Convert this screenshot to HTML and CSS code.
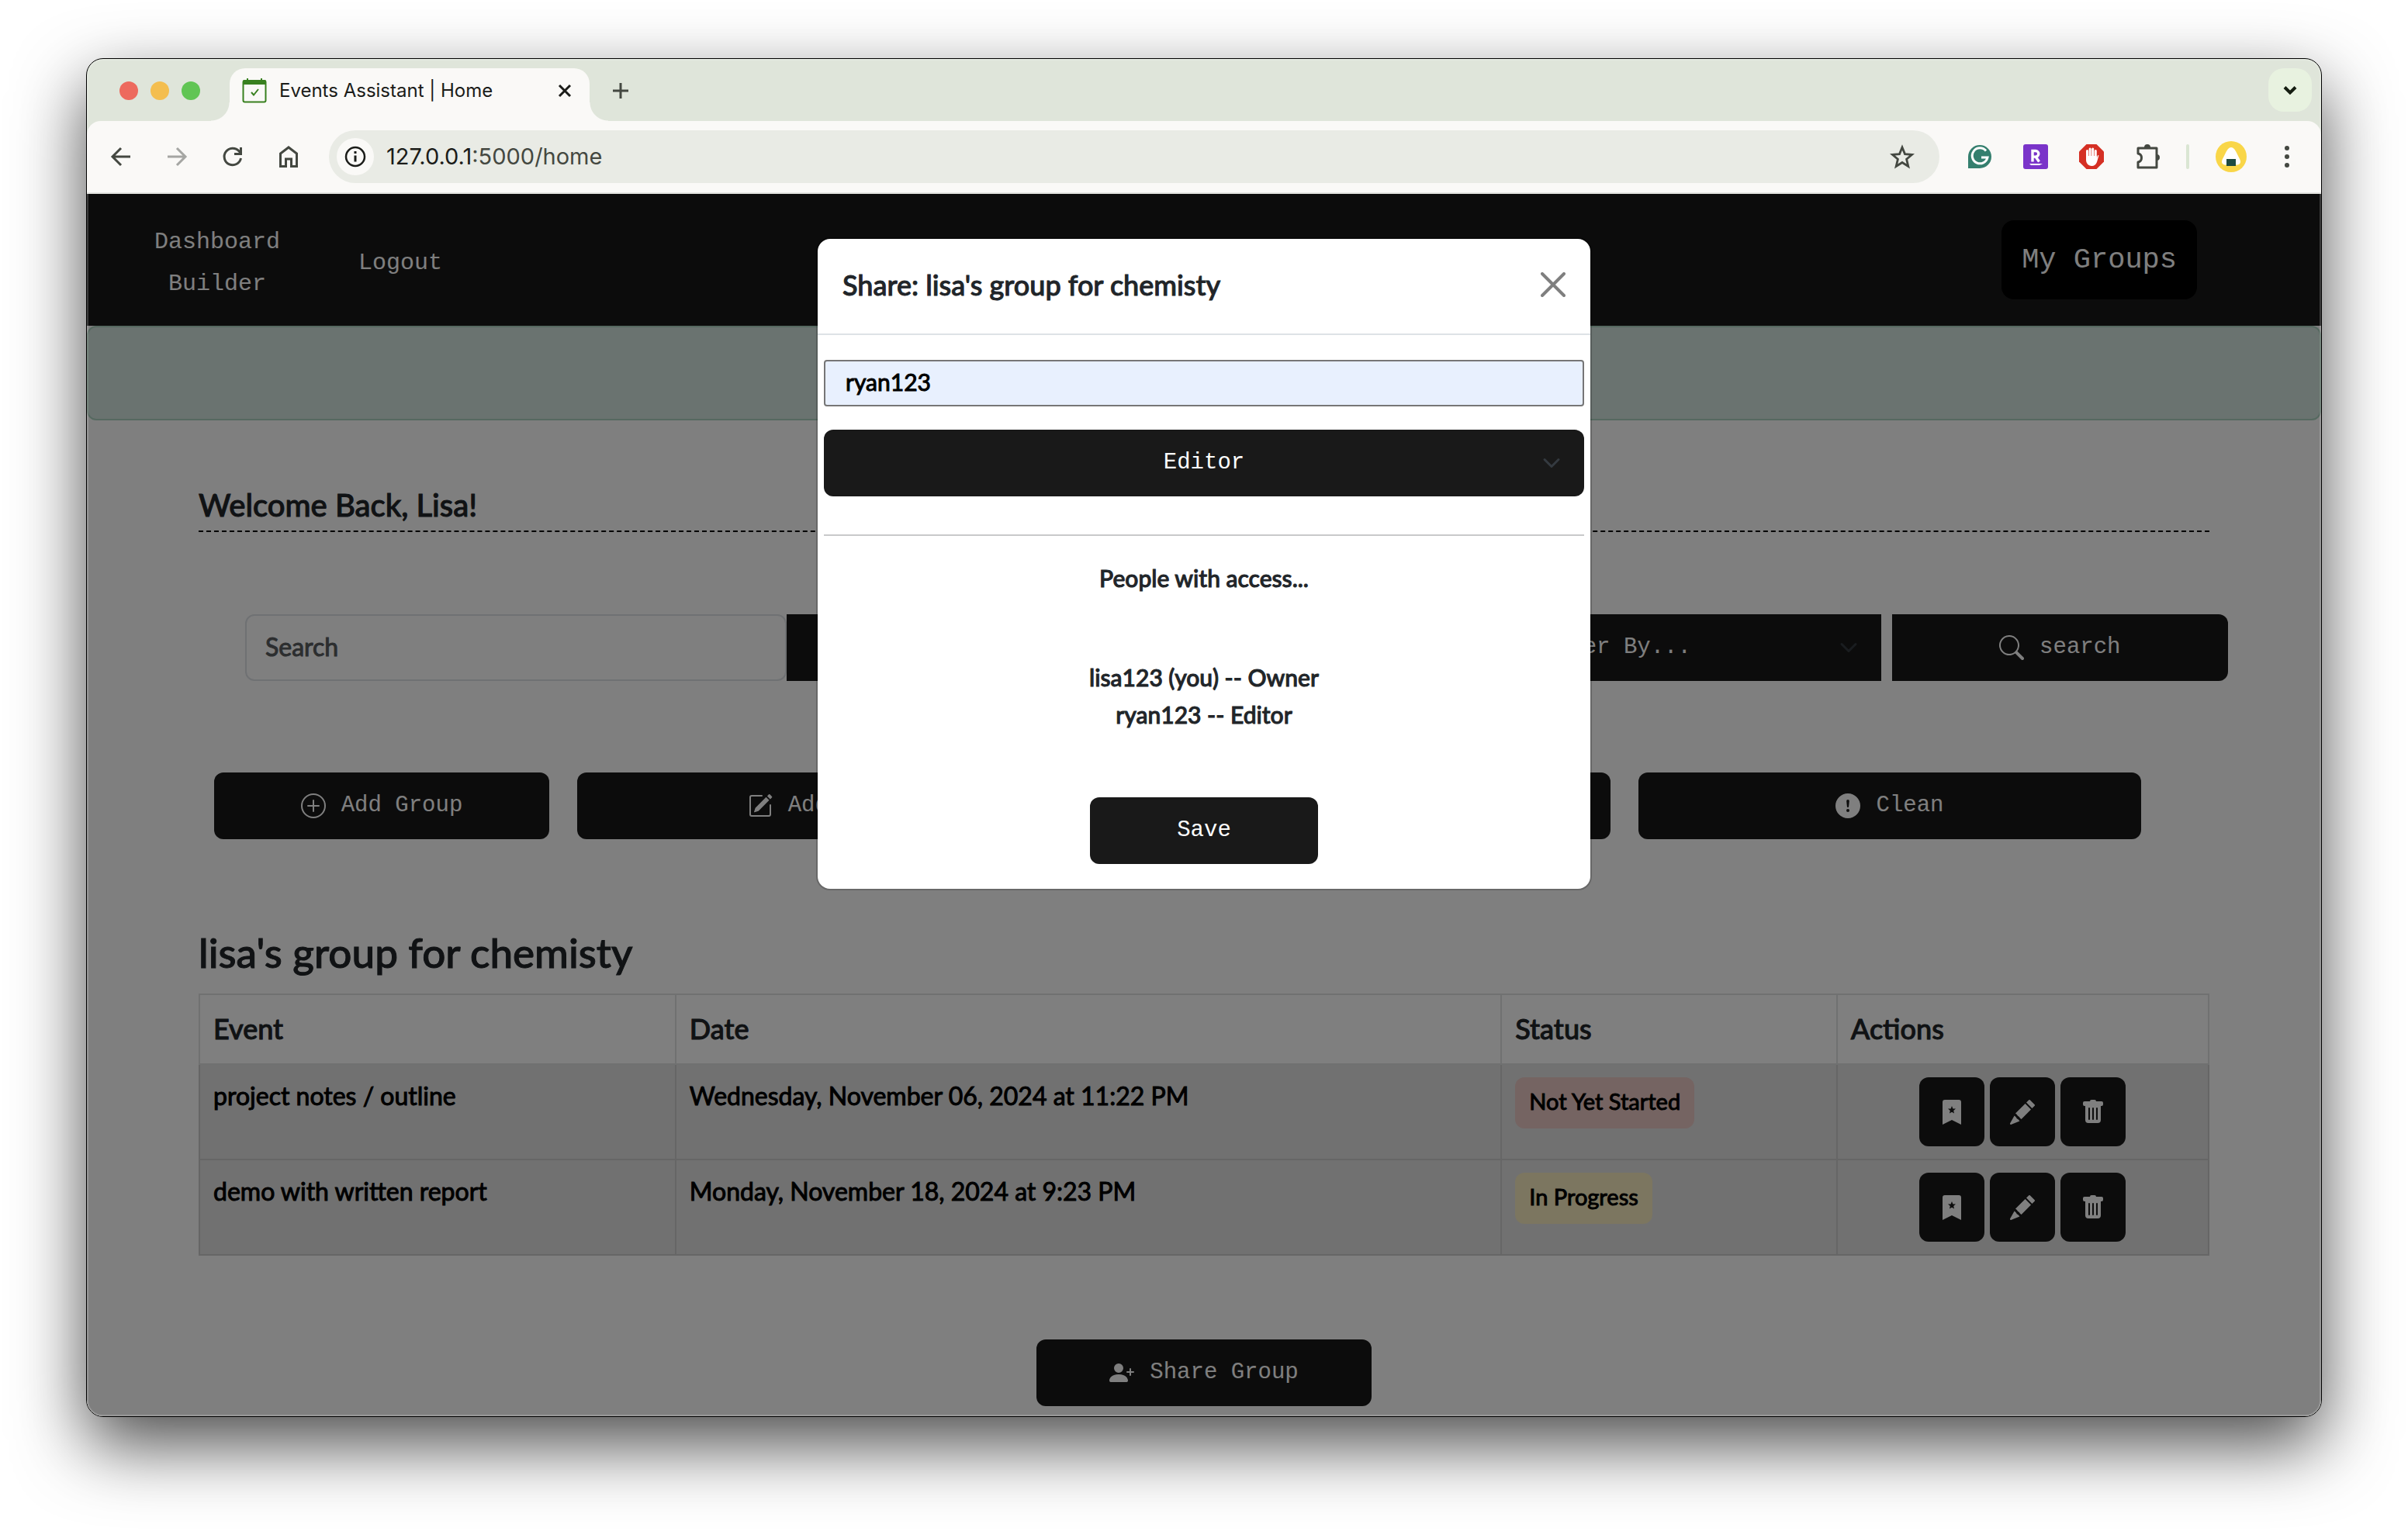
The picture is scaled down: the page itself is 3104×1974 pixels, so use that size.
FILE: index.html
```html
<!DOCTYPE html>
<html lang="en">
<head>
<meta charset="utf-8">
<meta name="viewport" content="width=device-width, initial-scale=1">
<title>Events Assistant | Home</title>
<link rel="stylesheet" href="styles.css">
</head>
<body>
<svg width="0" height="0" class="sprite" aria-hidden="true">
  <symbol id="i-bookmark" viewBox="0 0 16 16"><path fill-rule="evenodd" d="M2 16V1.500A1.500 1.500 0 0 1 3.500 0h9A1.500 1.500 0 0 1 14 1.500V16l-6-3zM8 4l-.7 1.700-1.800.1 1.400 1.200-.4 1.800L8 7.850l1.500.95-.4-1.800 1.400-1.200-1.800-.1z"/></symbol>
  <symbol id="i-pencil" viewBox="0 0 16 16"><path d="M12.854.146a.5.5 0 0 0-.707 0L10.500 1.793 14.207 5.500l1.647-1.646a.5.5 0 0 0 0-.708zM13.500 6.207 9.793 2.500 3.500 8.800l.9.7.6.9.9.6.6.9.8.600zM6.200 13.700l-.8-.9-1-.7-.6-1-1-.8L0 15.300a.5.5 0 0 0 .6.650z"/></symbol>
  <symbol id="i-trash" viewBox="0 0 16 16"><path d="M2.500 1a1 1 0 0 0-1 1v1a1 1 0 0 0 1 1H3v9a2 2 0 0 0 2 2h6a2 2 0 0 0 2-2V4h.5a1 1 0 0 0 1-1V2a1 1 0 0 0-1-1H10a1 1 0 0 0-1-1H7a1 1 0 0 0-1 1zm3 4a.5.5 0 0 1 .5.5v7a.5.5 0 0 1-1 0v-7a.5.5 0 0 1 .5-.5M8 5a.5.5 0 0 1 .5.5v7a.5.5 0 0 1-1 0v-7A.5.5 0 0 1 8 5m3 .5v7a.5.5 0 0 1-1 0v-7a.5.5 0 0 1 1 0"/></symbol>
</svg>

<div class="window">
  <header class="tabstrip">
    <div class="lights"><span class="light red"></span><span class="light amber"></span><span class="light green"></span></div>
    <div class="tab">
      <svg class="favicon" viewBox="0 0 32 32"><rect x="1.500" y="3" width="29" height="27.500" rx="2" fill="none" stroke="#38801f" stroke-width="2"/><path d="M1 8V4a2 2 0 0 1 2-2h3V0h2v2h16V0h2v2h3a2 2 0 0 1 2 2v4z" fill="#38801f"/><path d="m12 18 3 3.500 6-7.500" fill="none" stroke="#38801f" stroke-width="2"/></svg>
      <span class="tab-title">Events Assistant | Home</span>
      <button class="bare" aria-label="Close tab"><svg width="20" height="20" viewBox="0 0 20 20"><path d="m3 3 14 14M17 3 3 17" stroke="#1b1c19" stroke-width="3" fill="none"/></svg></button>
    </div>
    <button class="bare new-tab" aria-label="New tab"><svg width="22" height="22" viewBox="0 0 22 22"><path d="M11 1v20M1 11h20" stroke="#444841" stroke-width="3"/></svg></button>
    <button class="bare tab-search" aria-label="Search tabs"><svg width="20" height="20" viewBox="0 0 20 20"><path d="m3 6.500 7 7 7-7" fill="none" stroke="#151d11" stroke-width="4"/></svg></button>
  </header>

  <div class="toolbar">
    <button class="bare" aria-label="Back"><svg width="32" height="32" viewBox="0 0 32 32"><path d="M28 16H6M16 5 5 16l11 11" fill="none" stroke="#444841" stroke-width="3"/></svg></button>
    <button class="bare" aria-label="Forward"><svg width="32" height="32" viewBox="0 0 32 32"><path d="M4 16h22M16 5l11 11-11 11" fill="none" stroke="#a5a6a3" stroke-width="3"/></svg></button>
    <button class="bare" aria-label="Reload"><svg width="32" height="32" viewBox="0 0 32 32"><path d="M26.500 18A10.800 10.800 0 1 1 24 8.800l2 2.200" fill="none" stroke="#444841" stroke-width="3"/><path d="M28 4v10H18v-3h7V4z" fill="#444841"/></svg></button>
    <button class="bare" aria-label="Home"><svg width="32" height="32" viewBox="0 0 32 32"><path d="M5.500 28.500V12L16 4l10.500 8v16.500h-7V19h-7v9.500z" fill="none" stroke="#444841" stroke-width="3"/></svg></button>
    <div class="omnibox">
      <span class="info"><svg width="28" height="28" viewBox="0 0 28 28"><circle cx="14" cy="14" r="12" fill="none" stroke="#1b1c19" stroke-width="2.500"/><path d="M14 12.500v8M14 7v3" stroke="#1b1c19" stroke-width="3"/></svg></span>
      <span class="url">127.0.0.1<span class="path">:5000/home</span></span>
      <button class="bare" aria-label="Bookmark this tab"><svg width="32" height="32" viewBox="0 0 32 32"><path d="m16 4 3.500 8.600 9.200.7-7.100 6 2.200 9.100L16 23.500l-7.800 4.900 2.200-9.100-7.100-6 9.200-.7z" fill="none" stroke="#444841" stroke-width="2.800"/></svg></button>
    </div>
    <div class="extensions">
      <svg width="32" height="32" viewBox="0 0 32 32"><path d="M1 16a15 15 0 1 1 15 15H1z" fill="#347f6e"/><path d="M24 8.500A10 10 0 1 0 26 17h-8" fill="none" stroke="#fff" stroke-width="3"/></svg>
      <svg width="32" height="32" viewBox="0 0 32 32"><rect width="32" height="32" rx="3" fill="#7a34c9"/><path d="M12 22.500V8.500h4a3.800 3.800 0 0 1 0 7.600H12m4 0 4.500 6.400" fill="none" stroke="#fff" stroke-width="3.400"/><path d="M8 25h17l-4 2H10z" fill="#fff"/></svg>
      <svg width="32" height="32" viewBox="0 0 32 32"><path d="M9.500 0h13L32 9.500v13L22.500 32h-13L0 22.500v-13z" fill="#d53024"/><path d="M10.500 18V8.500M14.100 16V6M17.700 16V6M21.300 17V8.500" stroke="#fff" stroke-width="3" stroke-linecap="round"/><path d="M9 15h13.800v3l1-3c.6-1.500 1.800-1 1.400.3L23 23c-1.500 3.500-3.500 5-6.500 5-5 0-7.500-4-7.500-8z" fill="#fff"/></svg>
      <svg width="32" height="32" viewBox="0 0 32 32"><path d="M4 5h24v25H4v-7c6-1 6-10 0-11z" fill="none" stroke="#444841" stroke-width="3" stroke-linejoin="round"/><path d="M12 4a4 4 0 0 1 8 0zM28 13a4 4 0 0 1 0 8z" fill="#444841"/></svg>
      <span class="divider"></span>
      <svg width="40" height="40" viewBox="0 0 40 40"><circle cx="20" cy="20" r="20" fill="#f9d648"/><path d="M20 8c3 0 5 3 7 7l4.500 9c1.500 4-.5 6.500-4 6.500h-15c-3.500 0-5.500-2.500-4-6.500l4.500-9c2-4 4-7 7-7z" fill="#fff"/><path d="M14 23h12v9H14z" fill="#1d4a41"/></svg>
      <button class="bare" aria-label="Menu"><svg width="24" height="32" viewBox="0 0 24 32"><circle cx="12" cy="5" r="3" fill="#444841"/><circle cx="12" cy="16" r="3" fill="#444841"/><circle cx="12" cy="27" r="3" fill="#444841"/></svg></button>
    </div>
  </div>

  <div class="viewport">
    <nav class="nav">
      <a href="#" class="nav-link brand">Dashboard Builder</a>
      <a href="#" class="nav-link">Logout</a>
      <a href="#" class="nav-groups">My Groups</a>
    </nav>
    <div class="banner"></div>

    <main class="content">
      <h1 class="welcome">Welcome Back, Lisa!</h1>

      <form class="search-row">
        <input class="search-input" type="text" placeholder="Search" aria-label="Search">
        <select class="select" aria-label="Sort"><option></option></select>
        <select class="select filter" aria-label="Filter"><option>Filter By...</option></select>
        <button class="btn search-btn" type="button"><svg class="icon" viewBox="0 0 16 16"><path d="M11.742 10.344a6.500 6.500 0 1 0-1.397 1.398h-.001q.044.06.098.115l3.850 3.850a1 1 0 0 0 1.415-1.414l-3.850-3.850a1 1 0 0 0-.115-.1zM12 6.500a5.500 5.500 0 1 1-11 0 5.500 5.500 0 0 1 11 0"/></svg>search</button>
      </form>

      <div class="button-row">
        <button class="btn"><svg class="icon" viewBox="0 0 16 16"><path d="M8 15A7 7 0 1 1 8 1a7 7 0 0 1 0 14m0 1A8 8 0 1 0 8 0a8 8 0 0 0 0 16"/><path d="M8 4a.5.5 0 0 1 .5.5v3h3a.5.5 0 0 1 0 1h-3v3a.5.5 0 0 1-1 0v-3h-3a.5.5 0 0 1 0-1h3v-3A.5.5 0 0 1 8 4"/></svg>Add Group</button>
        <button class="btn"><svg class="icon" viewBox="0 0 16 16"><path d="M15.502 1.940a.5.5 0 0 1 0 .706L14.459 3.690l-2-2L13.502.646a.5.5 0 0 1 .707 0l1.293 1.293zm-1.750 2.456-2-2L4.939 9.210a.5.5 0 0 0-.121.196l-.805 2.414a.25.25 0 0 0 .316.316l2.414-.805a.5.5 0 0 0 .196-.120z"/><path fill-rule="evenodd" d="M1 13.500A1.500 1.500 0 0 0 2.500 15h11a1.500 1.500 0 0 0 1.500-1.500v-6a.5.5 0 0 0-1 0v6a.5.5 0 0 1-.5.5h-11a.5.5 0 0 1-.5-.5v-11a.5.5 0 0 1 .5-.5H9a.5.5 0 0 0 0-1H2.500A1.500 1.500 0 0 0 1 2.500z"/></svg>Add Event</button>
        <button class="btn" aria-label="Edit"></button>
        <button class="btn"><svg class="icon" viewBox="0 0 16 16"><path d="M16 8A8 8 0 1 1 0 8a8 8 0 0 1 16 0M8 4a.905.905 0 0 0-.9.995l.350 3.507a.552.552 0 0 0 1.100 0l.350-3.507A.905.905 0 0 0 8 4m.002 6a1 1 0 1 0 0 2 1 1 0 0 0 0-2"/></svg>Clean</button>
      </div>

      <h2 class="group-title">lisa's group for chemisty</h2>
      <table class="events">
        <colgroup><col class="c-event"><col class="c-date"><col class="c-status"><col></colgroup>
        <thead><tr><th>Event</th><th>Date</th><th>Status</th><th>Actions</th></tr></thead>
        <tbody>
          <tr>
            <td>project notes / outline</td>
            <td>Wednesday, November 06, 2024 at 11:22 PM</td>
            <td><span class="badge pink">Not Yet Started</span></td>
            <td><div class="actions">
              <button class="action" aria-label="Bookmark"><svg class="icon"><use href="#i-bookmark"/></svg></button>
              <button class="action" aria-label="Edit"><svg class="icon"><use href="#i-pencil"/></svg></button>
              <button class="action" aria-label="Delete"><svg class="icon"><use href="#i-trash"/></svg></button>
            </div></td>
          </tr>
          <tr>
            <td>demo with written report</td>
            <td>Monday, November 18, 2024 at 9:23 PM</td>
            <td><span class="badge yellow">In Progress</span></td>
            <td><div class="actions">
              <button class="action" aria-label="Bookmark"><svg class="icon"><use href="#i-bookmark"/></svg></button>
              <button class="action" aria-label="Edit"><svg class="icon"><use href="#i-pencil"/></svg></button>
              <button class="action" aria-label="Delete"><svg class="icon"><use href="#i-trash"/></svg></button>
            </div></td>
          </tr>
        </tbody>
      </table>
      <button class="btn share"><svg class="icon" viewBox="0 0 16 16"><path d="M1 14s-1 0-1-1 1-4 6-4 6 3 6 4-1 1-1 1zm5-6a3 3 0 1 0 0-6 3 3 0 0 0 0 6"/><path d="M13.500 5a.5.5 0 0 1 .5.5V7h1.500a.5.5 0 0 1 0 1H14v1.500a.5.5 0 0 1-1 0V8h-1.500a.5.5 0 0 1 0-1H13V5.500a.5.5 0 0 1 .5-.5"/></svg>Share Group</button>
    </main>

    <div class="backdrop">
      <section class="modal" role="dialog" aria-labelledby="share-title">
        <header class="modal-head">
          <h2 id="share-title">Share: lisa's group for chemisty</h2>
          <button class="bare" aria-label="Close"><svg width="32" height="32" viewBox="0 0 32 32"><path d="m2 2 28 28M30 2 2 30" stroke="#7f7f7f" stroke-width="4" stroke-linecap="round"/></svg></button>
        </header>
        <form class="modal-body">
          <input class="user-input" type="text" value="ryan123" aria-label="Username">
          <select class="select role" aria-label="Role"><option>Editor</option></select>
          <hr>
          <p class="access">People with access...</p>
          <ul class="people"><li>lisa123 (you) -- Owner</li><li>ryan123 -- Editor</li></ul>
          <button class="btn save" type="button">Save</button>
        </form>
      </section>
    </div>
  </div>
</div>
</body>
</html>
```

FILE: styles.css
```css
*, *::before, *::after { box-sizing: border-box; }

:root {
  --hand: Lato, "Open Sans", sans-serif;
  --mono: "Liberation Mono", monospace;
  --ui: Inter, "Liberation Sans", sans-serif;
  --ink: #212529;
  --dark: #191919;
}

body {
  margin: 0;
  min-height: 100vh;
  padding: 75px 111px 147px;
  display: flex;
  background: #fff;
  font-family: var(--hand);
  font-size: 32px;
  line-height: 48px;
  color: var(--ink);
}

h1, h2, p, ul { margin: 0; padding: 0; font-weight: 500; }
ul { list-style: none; }
button, input, select { font: inherit; color: inherit; margin: 0; }
button { cursor: pointer; }
svg { display: block; flex: none; }
.sprite { position: absolute; }
.bare { border: 0; padding: 0; background: none; display: grid; place-items: center; }

/* Browser window */
.window {
  position: relative;
  flex: 1;
  min-width: 0;
  display: flex;
  flex-direction: column;
  overflow: hidden;
  border: 1px solid #000;
  border-radius: 22px;
  background: #dfe5da;
  box-shadow: 0 36px 90px rgba(0, 0, 0, .7);
}
.window::after {
  content: "";
  position: absolute;
  inset: 0;
  border: 2px solid rgba(255, 255, 255, .2);
  border-radius: 20px;
  pointer-events: none;
}

.tabstrip { height: 80px; padding: 12px 12px 0 42px; display: flex; font-family: var(--ui); }
.lights { display: flex; gap: 16px; padding-top: 17px; width: 142px; }
.light { width: 24px; height: 24px; border-radius: 50%; }
.red { background: #ed6a5e; }
.amber { background: #f4be4f; }
.green { background: #61c554; }
.tab {
  position: relative;
  width: 464px;
  padding: 0 22px 10px 16px;
  display: flex;
  align-items: center;
  background: #faf9f7;
  border-radius: 20px 20px 0 0;
}
.tab::before, .tab::after {
  content: "";
  position: absolute;
  bottom: 0;
  width: 24px;
  height: 24px;
}
.tab::before { right: 100%; background: radial-gradient(circle at 0 0, transparent 23px, #faf9f7 24px); }
.tab::after { left: 100%; background: radial-gradient(circle at 100% 0, transparent 23px, #faf9f7 24px); }
.favicon { width: 32px; height: 32px; }
.tab-title { flex: 1; padding-left: 16px; font-size: 24px; line-height: 32px; color: #1b1c19; }
.new-tab { width: 80px; height: 58px; }
.tab-search { width: 56px; height: 56px; margin-left: auto; border-radius: 20px; background: #e8f2e0; }

.toolbar {
  height: 94px;
  padding: 0 32px 0 28px;
  display: flex;
  align-items: center;
  gap: 40px;
  background: #faf9f7;
  border-bottom: 2px solid #e3e4e0;
  border-radius: 18px 18px 0 0;
  font-family: var(--ui);
}
.omnibox {
  flex: 1;
  height: 68px;
  margin-left: -4px;
  padding: 0 32px 0 10px;
  display: flex;
  align-items: center;
  border-radius: 34px;
  background: #e9ebe5;
}
.info { width: 48px; height: 48px; display: grid; place-items: center; border-radius: 50%; background: #faf9f7; }
.url { flex: 1; padding-left: 16px; font-size: 29px; color: #1b1c19; }
.path { color: #444841; }
.extensions { display: flex; align-items: center; gap: 40px; margin-left: -4px; }
.divider { width: 4px; height: 32px; margin: 0 -6px; border-radius: 2px; background: #dae6d3; }

/* Page: the handwriting-style text carries a slight stroke for weight */
.viewport { position: relative; flex: 1; background: #fff; -webkit-text-stroke: 1px; }
.nav {
  min-height: 170px;
  padding: 0 160px 0 72px;
  display: flex;
  align-items: center;
  background: var(--dark);
  font-family: var(--mono);
  -webkit-text-stroke: 0;
}
.nav a { color: #fff; text-decoration: none; text-align: center; }
.nav-link { padding-top: 8px; font-size: 30px; line-height: 54px; margin-right: 86px; }
.brand { width: 192px; }
.nav .nav-groups {
  margin-left: auto;
  padding: 24px 26px;
  border-radius: 16px;
  background: #000;
  font-size: 37px;
  line-height: 54px;
}
.banner { height: 122px; border: 2px solid #acd3c1; border-radius: 12px; background: #d4e6e1; }

.content { padding: 82px 144px 8px; }
.welcome {
  padding-bottom: 6px;
  border-bottom: 2px dashed #000;
  font-size: 40px;
  line-height: 54px;
}

.btn, .select {
  height: 86px;
  border: 0;
  border-radius: 12px;
  background: var(--dark);
  color: #fff;
  font-family: var(--mono);
  font-size: 29px;
  -webkit-text-stroke: 0;
}
.btn { display: flex; align-items: center; justify-content: center; gap: 20px; padding: 0; }
.icon { width: 32px; height: 32px; fill: currentColor; }
.select {
  appearance: none;
  text-align: center;
  text-align-last: center;
  padding: 0 32px;
  background: var(--dark) url("data:image/svg+xml,%3Csvg xmlns='http://www.w3.org/2000/svg' viewBox='0 0 16 16'%3E%3Cpath fill='none' stroke='%23343a40' stroke-linecap='round' stroke-linejoin='round' stroke-width='2' d='m2 5 6 6 6-6'/%3E%3C/svg%3E") no-repeat right 30px center / 24px;
}

.search-row {
  display: grid;
  grid-template-columns: 29fr 29fr 14px 29fr 14px 18fr;
  margin: 106px -24px 0 60px;
}
.search-row .select { border-radius: 0; min-width: 0; }
.search-row .filter { grid-column: 4; }
.search-input {
  min-width: 0;
  height: 86px;
  padding: 0 24px 4px;
  border: 2px solid #dee2e6;
  border-radius: 12px;
  background: #fff;
}
.search-input::placeholder { color: #595c5f; opacity: 1; }
.search-row .search-btn { grid-column: 6; border-radius: 0 12px 12px 0; }

.button-row {
  display: grid;
  grid-template-columns: 2fr 3fr 3fr 3fr;
  gap: 36px;
  margin: 118px 88px 0 20px;
}

.group-title { margin-top: 110px; font-size: 53px; line-height: 72px; }
.events {
  width: 100%;
  margin-top: 17px;
  border-collapse: collapse;
  table-layout: fixed;
}
.c-event { width: 23.7%; }
.c-date { width: 41.1%; }
.c-status { width: 16.7%; }
.events th, .events td { border: 2px solid #e0e2e3; padding: 16px 17px; text-align: left; vertical-align: top; }
.events th { height: 90px; font-size: 36px; line-height: 54px; font-weight: 500; }
.events td { height: 123px; background: #e3e3e3; border-color: #cdcdcd; color: #000; }
.badge { display: block; width: max-content; padding: 7px 18px 11px; border-radius: 12px; font-size: 29px; }
.pink { background: #eac8c4; }
.yellow { background: #f8ecc0; }
.actions { display: flex; justify-content: center; gap: 7px; }
.action { width: 84px; height: 89px; padding: 0; border: 0; border-radius: 12px; background: var(--dark); color: #fff; display: grid; place-items: center; }
.share { width: 432px; margin: 108px auto 0; }

/* Share dialog */
.backdrop {
  position: absolute;
  inset: 0;
  padding-top: 56px;
  display: flex;
  justify-content: center;
  align-items: flex-start;
  background: rgba(0, 0, 0, .5);
}
.modal {
  width: 100%;
  max-width: 1000px;
  border: 2px solid rgba(0, 0, 0, .175);
  border-radius: 18px;
  background: #fff;
  background-clip: padding-box;
  font-size: 30px;
}
.modal-head {
  padding: 30px 32px 34px;
  display: flex;
  align-items: center;
  justify-content: space-between;
  border-bottom: 2px solid #dee2e6;
}
.modal-head h2 { font-size: 36px; line-height: 58px; }
.modal-body { padding: 32px 8px; display: flex; flex-direction: column; }
.user-input {
  height: 60px;
  padding: 0 26px 4px;
  border: 2px solid #767676;
  border-radius: 4px;
  background: #e8f0fe;
  color: #000;
}
.role { margin-top: 30px; }
.modal hr { width: 100%; margin: 49px 0 0; border: 0; border-top: 2px solid #c8c9ca; }
.access { margin-top: 30px; text-align: center; }
.people { margin-top: 80px; text-align: center; }
.save { width: 294px; margin: 83px auto 0; }
```
